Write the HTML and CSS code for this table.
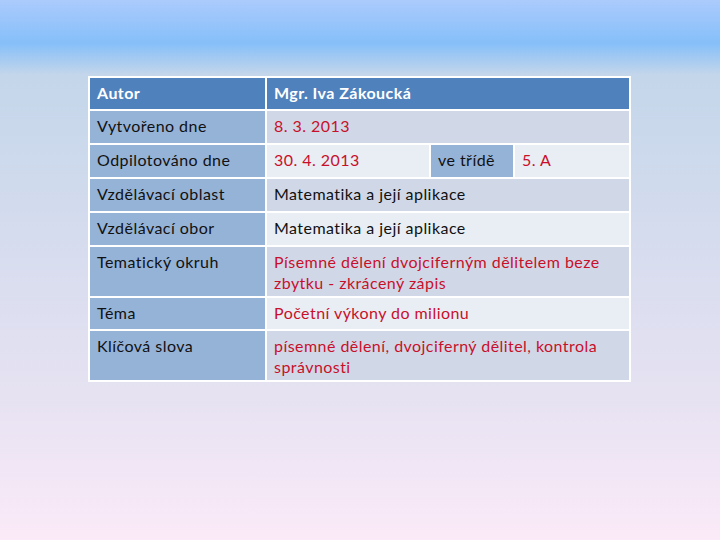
FILE: index.html
```html
<!DOCTYPE html>
<html lang="cs">
<head>
<meta charset="utf-8">
<title>Autor</title>
<link rel="stylesheet" href="styles.css">
</head>
<body>
<table class="info">
  <colgroup>
    <col class="c1"><col class="c2"><col class="c3"><col class="c4">
  </colgroup>
  <tr class="head h31">
    <td>Autor</td>
    <td colspan="3">Mgr. Iva Zákoucká</td>
  </tr>
  <tr class="odd h32">
    <td class="key">Vytvořeno dne</td>
    <td colspan="3" class="red">8. 3. 2013</td>
  </tr>
  <tr class="even h32">
    <td class="key">Odpilotováno dne</td>
    <td class="red">30. 4. 2013</td>
    <td class="key">ve třídě</td>
    <td class="red">5. A</td>
  </tr>
  <tr class="odd h32">
    <td class="key">Vzdělávací oblast</td>
    <td colspan="3">Matematika a její aplikace</td>
  </tr>
  <tr class="even h32">
    <td class="key">Vzdělávací obor</td>
    <td colspan="3">Matematika a její aplikace</td>
  </tr>
  <tr class="odd h49">
    <td class="key">Tematický okruh</td>
    <td colspan="3" class="red">Písemné dělení dvojciferným dělitelem beze zbytku - zkrácený zápis</td>
  </tr>
  <tr class="even h31">
    <td class="key">Téma</td>
    <td colspan="3" class="red">Početní výkony do milionu</td>
  </tr>
  <tr class="odd h49">
    <td class="key">Klíčová slova</td>
    <td colspan="3" class="red">písemné dělení, dvojciferný dělitel, kontrola správnosti</td>
  </tr>
</table>
</body>
</html>
```

FILE: styles.css
```css
html, body {
  margin: 0;
  padding: 0;
}
body {
  width: 720px;
  height: 540px;
  overflow: hidden;
  background: linear-gradient(to bottom, #abcbfc 0px, #86bff9 43px, #c4d6ea 75px, #e6e2f2 395px, #fbeaf8 540px);
  font-family: Lato, "Open Sans", sans-serif;
  font-size: 16px;
  letter-spacing: 0.45px;
  color: #111;
}
.info {
  margin: 76px 0 0 88px;
  width: 543px;
  table-layout: fixed;
  border-collapse: separate;
  border-spacing: 2px;
  background: #fff;
}
.c1 { width: 175px; }
.c2 { width: 162px; }
.c3 { width: 82px; }
.c4 { width: 114px; }
.info td {
  padding: 4px 6px 0 7px;
  vertical-align: top;
  line-height: 21px;
  box-sizing: border-box;
}
.h31 td { height: 31px; }
.h32 td { height: 32px; }
.h49 td { height: 49px; }
.head td {
  background: #4f81bd;
  color: #fff;
  font-weight: bold;
}
.odd td { background: #d0d8e8; }
.even td { background: #e9edf4; }
.info td.key { background: #95b3d7; color: #111; }
.red { color: #c8102a; }
```
